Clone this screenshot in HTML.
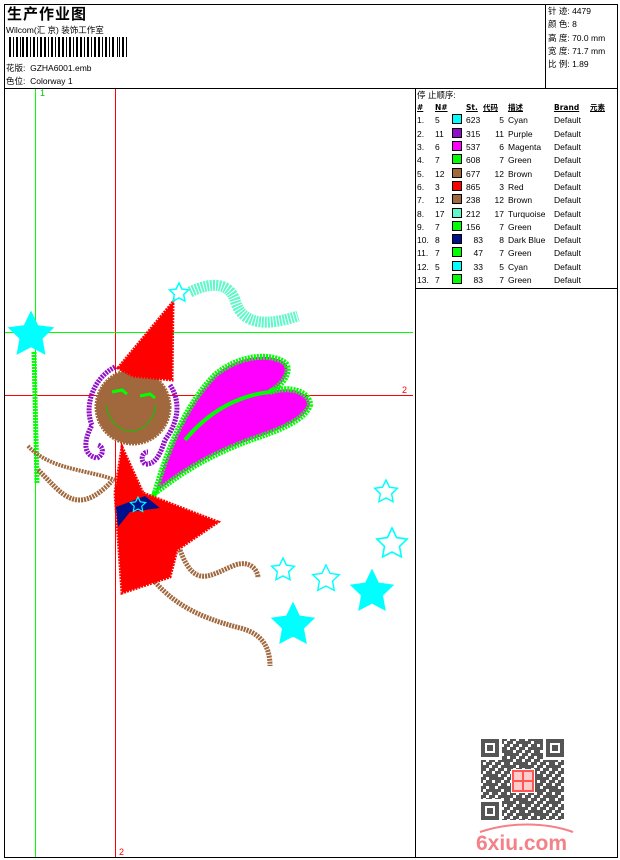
<!DOCTYPE html>
<html><head><meta charset="utf-8">
<style>
*{margin:0;padding:0;box-sizing:border-box}
body{width:620px;height:860px;background:#fff;position:relative;overflow:hidden;font-family:"Liberation Sans","Noto Sans CJK SC",sans-serif;font-size:9px;color:#000}
.a{position:absolute;white-space:nowrap}
.l{position:absolute;background:#000}
table{border-collapse:collapse;font-size:8.5px;table-layout:fixed;width:204px}
td{padding:0;height:13.3px;line-height:13px;white-space:nowrap;overflow:hidden}
.sw{display:inline-block;width:10px;height:10px;border:1px solid #000;vertical-align:-1px}
.r{text-align:right}
</style></head><body>
<div class="l" style="left:4px;top:4px;width:614px;height:1px"></div>
<div class="l" style="left:4px;top:857px;width:614px;height:1px"></div>
<div class="l" style="left:4px;top:4px;width:1px;height:854px"></div>
<div class="l" style="left:617px;top:4px;width:1px;height:854px"></div>
<div class="l" style="left:4px;top:88px;width:614px;height:1px"></div>
<div class="l" style="left:545px;top:4px;width:1px;height:85px"></div>
<div class="l" style="left:415px;top:88px;width:1px;height:770px"></div>
<div class="l" style="left:415px;top:288px;width:203px;height:1px"></div>

<div class="a" style="left:7px;top:3px;font-size:15px;font-weight:bold;letter-spacing:1px">生产作业图</div>
<div class="a" style="left:6px;top:24px;font-size:8.5px">Wilcom(汇 京) 装饰工作室</div>
<svg class="a" style="left:9px;top:37px" width="120" height="20">
<g fill="#000">
<rect x="0" y="0" width="2" height="20"/><rect x="4" y="0" width="1" height="20"/><rect x="7" y="0" width="2" height="20"/><rect x="11" y="0" width="1" height="20"/><rect x="13" y="0" width="2" height="20"/><rect x="17" y="0" width="2" height="20"/><rect x="21" y="0" width="1" height="20"/><rect x="24" y="0" width="2" height="20"/><rect x="28" y="0" width="1" height="20"/><rect x="31" y="0" width="2" height="20"/><rect x="35" y="0" width="2" height="20"/><rect x="39" y="0" width="1" height="20"/><rect x="42" y="0" width="2" height="20"/><rect x="46" y="0" width="1" height="20"/><rect x="49" y="0" width="2" height="20"/><rect x="53" y="0" width="2" height="20"/><rect x="57" y="0" width="1" height="20"/><rect x="60" y="0" width="2" height="20"/><rect x="64" y="0" width="1" height="20"/><rect x="67" y="0" width="2" height="20"/><rect x="71" y="0" width="2" height="20"/><rect x="75" y="0" width="1" height="20"/><rect x="78" y="0" width="2" height="20"/><rect x="82" y="0" width="1" height="20"/><rect x="85" y="0" width="2" height="20"/><rect x="89" y="0" width="2" height="20"/><rect x="93" y="0" width="1" height="20"/><rect x="96" y="0" width="2" height="20"/><rect x="100" y="0" width="1" height="20"/><rect x="103" y="0" width="2" height="20"/><rect x="108" y="0" width="1" height="20"/><rect x="110" y="0" width="1" height="20"/><rect x="113" y="0" width="2" height="20"/><rect x="117" y="0" width="1" height="20"/>
</g></svg>
<div class="a" style="left:6px;top:62px;font-size:8.5px">花版:&nbsp; GZHA6001.emb</div>
<div class="a" style="left:6px;top:75px;font-size:8.5px">色位:&nbsp; Colorway 1</div>

<div class="a" style="left:548px;top:5px;line-height:13.3px;font-size:8.5px">针 迹: 4479<br>颜 色: 8<br>高 度: 70.0 mm<br>宽 度: 71.7 mm<br>比 例: 1.89</div>

<div class="a" style="left:417px;top:89px;font-size:8.5px">停 止顺序:</div>
<table class="a" style="left:417px;top:101px">
<colgroup><col style="width:18px"><col style="width:17px"><col style="width:14px"><col style="width:17px"><col style="width:21px"><col style="width:4px"><col style="width:46px"><col style="width:36px"><col style="width:31px"></colgroup>
<tr style="font-weight:bold;font-family:'DejaVu Sans','Noto Sans CJK SC',sans-serif;font-size:7.5px"><td><u>#</u></td><td><u>N#</u></td><td></td><td><u>St.</u></td><td><u>代码</u></td><td></td><td><u>描述</u></td><td><u>Brand</u></td><td><u>元素</u></td></tr>
<tr><td>1.</td><td>5</td><td><span class="sw" style="background:#0ff"></span></td><td>623</td><td class="r">5</td><td></td><td>Cyan</td><td>Default</td><td></td></tr>
<tr><td>2.</td><td>11</td><td><span class="sw" style="background:#9010c8"></span></td><td>315</td><td class="r">11</td><td></td><td>Purple</td><td>Default</td><td></td></tr>
<tr><td>3.</td><td>6</td><td><span class="sw" style="background:#f0f"></span></td><td>537</td><td class="r">6</td><td></td><td>Magenta</td><td>Default</td><td></td></tr>
<tr><td>4.</td><td>7</td><td><span class="sw" style="background:#0f0"></span></td><td>608</td><td class="r">7</td><td></td><td>Green</td><td>Default</td><td></td></tr>
<tr><td>5.</td><td>12</td><td><span class="sw" style="background:#a0683c"></span></td><td>677</td><td class="r">12</td><td></td><td>Brown</td><td>Default</td><td></td></tr>
<tr><td>6.</td><td>3</td><td><span class="sw" style="background:#f00"></span></td><td>865</td><td class="r">3</td><td></td><td>Red</td><td>Default</td><td></td></tr>
<tr><td>7.</td><td>12</td><td><span class="sw" style="background:#a0683c"></span></td><td>238</td><td class="r">12</td><td></td><td>Brown</td><td>Default</td><td></td></tr>
<tr><td>8.</td><td>17</td><td><span class="sw" style="background:#60f8c8"></span></td><td>212</td><td class="r">17</td><td></td><td>Turquoise</td><td>Default</td><td></td></tr>
<tr><td>9.</td><td>7</td><td><span class="sw" style="background:#0f0"></span></td><td>156</td><td class="r">7</td><td></td><td>Green</td><td>Default</td><td></td></tr>
<tr><td>10.</td><td>8</td><td><span class="sw" style="background:#00108c"></span></td><td class="r">83</td><td class="r">8</td><td></td><td>Dark Blue</td><td>Default</td><td></td></tr>
<tr><td>11.</td><td>7</td><td><span class="sw" style="background:#0f0"></span></td><td class="r">47</td><td class="r">7</td><td></td><td>Green</td><td>Default</td><td></td></tr>
<tr><td>12.</td><td>5</td><td><span class="sw" style="background:#0ff"></span></td><td class="r">33</td><td class="r">5</td><td></td><td>Cyan</td><td>Default</td><td></td></tr>
<tr><td>13.</td><td>7</td><td><span class="sw" style="background:#0f0"></span></td><td class="r">83</td><td class="r">7</td><td></td><td>Green</td><td>Default</td><td></td></tr>
</table>

<svg class="a" style="left:0;top:0" width="620" height="860">
<defs>
<pattern id="qr" width="9" height="9" patternUnits="userSpaceOnUse">
<rect x="0" y="0" width="3" height="3" fill="#555"/><rect x="6" y="0" width="3" height="6" fill="#555"/><rect x="3" y="3" width="3" height="3" fill="#555"/><rect x="0" y="6" width="6" height="3" fill="#555"/>
</pattern>
<pattern id="qr2" width="15" height="12" patternUnits="userSpaceOnUse">
<rect x="9" y="3" width="3" height="6" fill="#555"/><rect x="0" y="9" width="3" height="3" fill="#555"/><rect x="12" y="9" width="3" height="3" fill="#555"/>
</pattern>
</defs>
<g shape-rendering="crispEdges">
<line x1="35.5" y1="89" x2="35.5" y2="857" stroke="#0f0"/>
<line x1="115.5" y1="89" x2="115.5" y2="857" stroke="#f00"/>
<line x1="5" y1="332.5" x2="413" y2="332.5" stroke="#0f0"/>
<line x1="5" y1="395.5" x2="413" y2="395.5" stroke="#f00"/>
</g>
<text x="40" y="96" fill="#0c0" font-size="9" font-family="Liberation Sans">1</text>
<text x="402" y="393" fill="#f00" font-size="9" font-family="Liberation Sans">2</text>
<text x="119" y="855" fill="#f00" font-size="9" font-family="Liberation Sans">2</text>
<g fill="none" stroke-dasharray="2 1">
<path d="M190 292 C215 280 230 285 235 300 C240 318 255 330 298 316" stroke="#60f8c8" stroke-width="11"/>
<path d="M34 352 L37 483" stroke="#0f0" stroke-width="5"/>
<path d="M38 470 C60 490 75 520 112 481" stroke="#a0683c" stroke-width="5"/>
<path d="M28 446 C50 470 90 470 115 480" stroke="#a0683c" stroke-width="4"/>
<path d="M180 550 C195 590 210 575 235 565 C250 560 258 570 258 578" stroke="#a0683c" stroke-width="5"/>
<path d="M155 582 C180 610 210 620 240 628 C260 633 270 645 270 666" stroke="#a0683c" stroke-width="5"/>
<path d="M115 367 C90 380 85 410 92 425 C84 440 82 455 97 458 C104 455 104 447 98 445" stroke="#9010c8" stroke-width="5"/>
<path d="M170 385 C180 400 180 420 165 440 C160 455 155 465 145 464 C140 460 142 452 148 452" stroke="#9010c8" stroke-width="5"/>
</g>
<circle cx="133" cy="407" r="37" fill="#a0683c" stroke="#a0683c" stroke-dasharray="2 1" stroke-width="3"/>
<path d="M106 405 C112 440 150 440 156 405" fill="none" stroke="#0c0" stroke-width="1"/>
<path d="M112 392 l10 -2 l5 4 M140 396 l10 -2 l5 4" stroke="#0f0" stroke-width="3" fill="none"/>
<polygon points="118,368 173,302 172,380 133,376" fill="#f00" stroke="#f00" stroke-dasharray="2 1" stroke-width="3"/>
<path d="M155 493 C170 440 190 400 215 375 C245 350 280 355 287 365 C290 375 282 385 270 392 C290 385 310 392 310 405 C305 420 280 430 250 440 C210 455 185 470 155 493 Z" fill="#f0f" stroke="#0f0" stroke-width="6" stroke-dasharray="2 1"/>
<path d="M270 392 C240 395 210 410 185 440" fill="none" stroke="#0f0" stroke-width="4"/>
<polygon points="122,447 143,493 218,522 177,550 170,577 122,593 115,493" fill="#f00" stroke="#f00" stroke-width="3" stroke-dasharray="2 1"/>
<polygon points="116,507 145,496 160,508 130,512 118,527" fill="#00108c"/>
<g fill="none" stroke="#0ff" stroke-width="2">
<path d="M0 -1 L0.29 -0.4 L0.95 -0.31 L0.47 0.15 L0.59 0.81 L0 0.5 L-0.59 0.81 L-0.47 0.15 L-0.95 -0.31 L-0.29 -0.4 Z" transform="translate(31 335) scale(22)" fill="#0ff" stroke-width="0.1"/>
<path d="M0 -1 L0.29 -0.4 L0.95 -0.31 L0.47 0.15 L0.59 0.81 L0 0.5 L-0.59 0.81 L-0.47 0.15 L-0.95 -0.31 L-0.29 -0.4 Z" transform="translate(179 293) scale(10)" stroke-width="0.15"/>
<path d="M0 -1 L0.29 -0.4 L0.95 -0.31 L0.47 0.15 L0.59 0.81 L0 0.5 L-0.59 0.81 L-0.47 0.15 L-0.95 -0.31 L-0.29 -0.4 Z" transform="translate(386 492) scale(12)" stroke-width="0.12"/>
<path d="M0 -1 L0.29 -0.4 L0.95 -0.31 L0.47 0.15 L0.59 0.81 L0 0.5 L-0.59 0.81 L-0.47 0.15 L-0.95 -0.31 L-0.29 -0.4 Z" transform="translate(392 544) scale(16)" stroke-width="0.1"/>
<path d="M0 -1 L0.29 -0.4 L0.95 -0.31 L0.47 0.15 L0.59 0.81 L0 0.5 L-0.59 0.81 L-0.47 0.15 L-0.95 -0.31 L-0.29 -0.4 Z" transform="translate(283 570) scale(12)" stroke-width="0.12"/>
<path d="M0 -1 L0.29 -0.4 L0.95 -0.31 L0.47 0.15 L0.59 0.81 L0 0.5 L-0.59 0.81 L-0.47 0.15 L-0.95 -0.31 L-0.29 -0.4 Z" transform="translate(326 579) scale(14)" stroke-width="0.1"/>
<path d="M0 -1 L0.29 -0.4 L0.95 -0.31 L0.47 0.15 L0.59 0.81 L0 0.5 L-0.59 0.81 L-0.47 0.15 L-0.95 -0.31 L-0.29 -0.4 Z" transform="translate(372 592) scale(21)" fill="#0ff" stroke-width="0.1"/>
<path d="M0 -1 L0.29 -0.4 L0.95 -0.31 L0.47 0.15 L0.59 0.81 L0 0.5 L-0.59 0.81 L-0.47 0.15 L-0.95 -0.31 L-0.29 -0.4 Z" transform="translate(293 625) scale(21)" fill="#0ff" stroke-width="0.1"/>
<path d="M0 -1 L0.29 -0.4 L0.95 -0.31 L0.47 0.15 L0.59 0.81 L0 0.5 L-0.59 0.81 L-0.47 0.15 L-0.95 -0.31 L-0.29 -0.4 Z" transform="translate(138 505) scale(8)" stroke-width="0.15"/>
</g>
<g shape-rendering="crispEdges">
<rect x="481" y="739" width="83" height="81" fill="url(#qr)"/>
<rect x="481" y="739" width="83" height="81" fill="url(#qr2)"/>
<rect x="481" y="739" width="21" height="21" fill="#fff"/><rect x="543" y="739" width="21" height="21" fill="#fff"/><rect x="481" y="799" width="21" height="21" fill="#fff"/>
<g fill="#555">
<rect x="481" y="739" width="18" height="18"/><rect x="485" y="743" width="10" height="10" fill="#fff"/><rect x="487" y="745" width="6" height="6"/>
<rect x="546" y="739" width="18" height="18"/><rect x="550" y="743" width="10" height="10" fill="#fff"/><rect x="552" y="745" width="6" height="6"/>
<rect x="481" y="802" width="18" height="18"/><rect x="485" y="806" width="10" height="10" fill="#fff"/><rect x="487" y="808" width="6" height="6"/>
</g>
<rect x="511" y="769" width="24" height="24" fill="#fff"/>
<rect x="512" y="770" width="22" height="22" fill="#f55"/>
<rect x="514" y="772" width="8" height="8" fill="#fcc"/><rect x="524" y="772" width="8" height="8" fill="#fcc"/><rect x="514" y="782" width="8" height="8" fill="#fcc"/><rect x="524" y="782" width="8" height="8" fill="#fcc"/>
</g>
<text x="476" y="850" font-family="Liberation Sans" font-weight="bold" font-size="21" fill="#f48088">6xiu.com</text>
<path d="M480 832 C510 822 545 822 573 832" stroke="#f48088" stroke-width="2" fill="none"/>
</svg>
</body></html>
